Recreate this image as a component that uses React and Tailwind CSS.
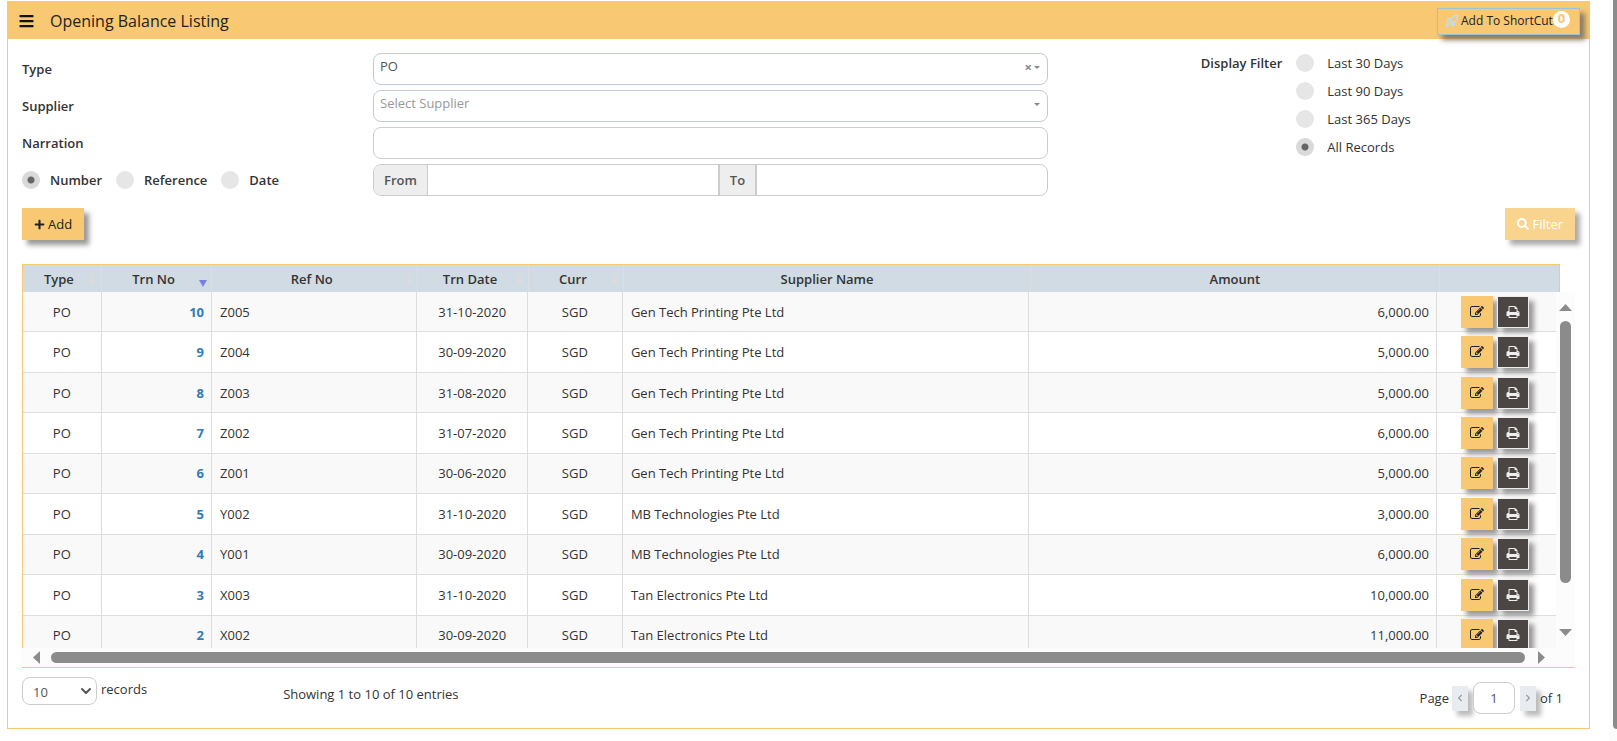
import React, { useState } from 'react';
import {
  FaBars,
  FaPlus,
  FaSearch,
  FaChevronLeft,
  FaChevronRight,
} from 'react-icons/fa';
import { FiChevronDown } from 'react-icons/fi';
import { Rocket } from 'lucide-react';
import clsx from 'clsx';

const records = [
  { no: 10, ref: 'Z005', date: '31-10-2020', supplier: 'Gen Tech Printing Pte Ltd', amount: '6,000.00' },
  { no: 9, ref: 'Z004', date: '30-09-2020', supplier: 'Gen Tech Printing Pte Ltd', amount: '5,000.00' },
  { no: 8, ref: 'Z003', date: '31-08-2020', supplier: 'Gen Tech Printing Pte Ltd', amount: '5,000.00' },
  { no: 7, ref: 'Z002', date: '31-07-2020', supplier: 'Gen Tech Printing Pte Ltd', amount: '6,000.00' },
  { no: 6, ref: 'Z001', date: '30-06-2020', supplier: 'Gen Tech Printing Pte Ltd', amount: '5,000.00' },
  { no: 5, ref: 'Y002', date: '31-10-2020', supplier: 'MB Technologies Pte Ltd', amount: '3,000.00' },
  { no: 4, ref: 'Y001', date: '30-09-2020', supplier: 'MB Technologies Pte Ltd', amount: '6,000.00' },
  { no: 3, ref: 'X003', date: '31-10-2020', supplier: 'Tan Electronics Pte Ltd', amount: '10,000.00' },
  { no: 2, ref: 'X002', date: '30-09-2020', supplier: 'Tan Electronics Pte Ltd', amount: '11,000.00' },
];

const columns = [
  { label: 'Type', sort: 'both' },
  { label: 'Trn No', sort: 'desc' },
  { label: 'Ref No', sort: 'both' },
  { label: 'Trn Date', sort: 'both' },
  { label: 'Curr', sort: 'both' },
  { label: 'Supplier Name' },
  { label: 'Amount' },
  { label: '' },
];

const searchBy = ['Number', 'Reference', 'Date'];
const periods = ['Last 30 Days', 'Last 90 Days', 'Last 365 Days', 'All Records'];

const ColGroup = () => (
  <colgroup>
    <col className="w-[5.1%]" />
    <col className="w-[7.2%]" />
    <col className="w-[13.4%]" />
    <col className="w-[7.2%]" />
    <col className="w-[6.2%]" />
    <col className="w-[26.5%]" />
    <col className="w-[26.6%]" />
    <col className="w-[7.8%]" />
  </colgroup>
);

const Radio = ({ name, label, checked, onChange, className, textClass }) => (
  <label className={clsx('flex items-center', className)}>
    <input
      type="radio"
      name={name}
      checked={checked}
      onChange={onChange}
      className="appearance-none w-[18px] h-[18px] rounded-full bg-[#e6e6e6] checked:bg-[#d9d9d9] checked:bg-[radial-gradient(circle,#666_3px,transparent_4px)] shrink-0"
    />
    <span className={textClass}>{label}</span>
  </label>
);

const SortIcon = ({ sort }) => {
  if (!sort) return null;
  return (
    <svg viewBox="0 0 8 14" className="absolute right-1 top-2 w-2 h-3.5" aria-hidden="true">
      {sort === 'both' ? (
        <path d="M4 0l3.5 6h-7zM4 13L.5 7h7z" fill="#d9dbdf" />
      ) : (
        <path d="M0 7h8l-4 7z" fill="#7b7fe0" />
      )}
    </svg>
  );
};

const EditIcon = () => (
  <svg viewBox="0 0 1792 1792" className="w-3.5 h-3.5" fill="currentColor" aria-hidden="true">
    <path d="M888 1184l116-116-152-152-116 116v56h96v96h56zm440-720q-16-16-33 1l-350 350q-17 17-1 33t33-1l350-350q17-17 1-33zm80 594v190q0 119-84.500 203.500t-203.500 84.500h-832q-119 0-203.500-84.500t-84.500-203.500v-832q0-119 84.500-203.500t203.500-84.500h832q63 0 117 25 15 7 18 23 3 17-9 29l-49 49q-14 14-32 8-23-6-45-6h-832q-66 0-113 47t-47 113v832q0 66 47 113t113 47h832q66 0 113-47t47-113v-126q0-13 9-22l64-64q15-15 35-7t20 29zm-96-738l288 288-672 672h-288v-288zm444 132l-92 92-288-288 92-92q28-28 68-28t68 28l152 152q28 28 28 68t-28 68z" />
  </svg>
);

const PrintIcon = () => (
  <svg viewBox="0 0 1792 1792" className="w-3.5 h-3.5" fill="currentColor" aria-hidden="true">
    <path d="M448 1536h896v-256h-896v256zm0-640h896v-384h-160q-40 0-68-28t-28-68v-160h-640v640zm1152 64q0-26-19-45t-45-19-45 19-19 45 19 45 45 19 45-19 19-45zm128 0v416q0 13-9.500 22.500t-22.500 9.500h-224v160q0 40-28 68t-68 28h-960q-40 0-68-28t-28-68v-160h-224q-13 0-22.500-9.500t-9.500-22.500v-416q0-79 56.500-135.500t135.500-56.500h64v-544q0-40 28-68t68-28h672q40 0 88 20t76 48l152 152q28 28 48 76t20 88v256h64q79 0 135.500 56.500t56.500 135.500z" />
  </svg>
);

const Arrow = ({ dir }) => {
  const paths = {
    up: 'M0 7l6.500-7 6.500 7z',
    down: 'M0 0h13l-6.500 7z',
    left: 'M7 0v13l-7-6.500z',
    right: 'M0 0v13l7-6.500z',
  };
  const vertical = dir === 'up' || dir === 'down';
  return (
    <svg
      viewBox={vertical ? '0 0 13 7' : '0 0 7 13'}
      className={clsx('shrink-0', vertical ? 'w-[13px] h-[7px]' : 'w-[7px] h-[13px]')}
      aria-hidden="true"
    >
      <path d={paths[dir]} fill="#8b8b8b" />
    </svg>
  );
};

const Header = () => (
  <header className="flex items-center justify-between bg-[#f8c872] h-[38px] pt-0.5 pl-[11px] pr-[9px]">
    <div className="flex items-center gap-4">
      <button aria-label="Menu">
        <FaBars className="w-[15px] h-4 text-[#111]" />
      </button>
      <h1 className="text-[16px] text-[#222]">Opening Balance Listing</h1>
    </div>
    <button className="flex items-center w-[143px] h-[27px] pl-[7px] border border-[#9cc3d9] text-[#222] text-xs shadow-[5px_5px_5px_#8b7d66]">
      <Rocket className="w-3.5 h-3.5 mr-0.5 shrink-0 stroke-[2.5] text-[#c4dcec]" />
      <span className="whitespace-nowrap">Add To ShortCut</span>
      <span className="w-[17px] h-[17px] mb-1 shrink-0 rounded-full bg-white text-[#f8c872] text-[13px] font-bold flex items-center justify-center">
        0
      </span>
    </button>
  </header>
);

const Filters = () => {
  const [by, setBy] = useState('Number');
  const [period, setPeriod] = useState('All Records');

  return (
    <div className="grid grid-cols-[351fr_675fr_527fr] pt-3.5">
      <div className="grid gap-[5px] auto-rows-[32px] items-center font-semibold">
        <label htmlFor="type">Type</label>
        <label htmlFor="supplier">Supplier</label>
        <label htmlFor="narration">Narration</label>
        <div className="flex items-center gap-3.5">
          {searchBy.map((item) => (
            <Radio
              key={item}
              name="by"
              label={item}
              checked={by === item}
              onChange={() => setBy(item)}
              textClass="ml-2.5"
            />
          ))}
        </div>
      </div>

      <div className="grid gap-[5px] auto-rows-[32px]">
        <div className="relative">
          <select
            id="type"
            className="appearance-none w-full h-full rounded-lg border border-[#c2cad8] px-1.5 pb-1.5 text-[#555]"
          >
            <option>PO</option>
          </select>
          <span className="absolute right-2 top-1.5 flex items-center gap-0.5 text-[#888] leading-4 font-bold pointer-events-none">
            ×
            <svg viewBox="0 0 6 3" className="w-1.5 h-[3px]" fill="#888"><path d="M0 0h6l-3 3z" /></svg>
          </span>
        </div>
        <div className="relative">
          <select
            id="supplier"
            className="appearance-none w-full h-full rounded-lg border border-[#c2cad8] px-1.5 pb-1.5 text-[#999]"
          >
            <option>Select Supplier</option>
          </select>
          <span className="absolute right-2 top-1.5 flex items-center h-4 pointer-events-none">
            <svg viewBox="0 0 6 3" className="w-1.5 h-[3px]" fill="#888"><path d="M0 0h6l-3 3z" /></svg>
          </span>
        </div>
        <input id="narration" className="w-full rounded-lg border border-[#ccc] px-2" />
        <div className="flex rounded-lg border border-[#ccc] overflow-hidden font-semibold text-[#555]">
          <label htmlFor="from" className="flex items-center px-2.5 bg-[#eee] border-r border-[#ccc]">
            From
          </label>
          <input id="from" className="flex-1 min-w-0 px-2" />
          <label htmlFor="to" className="flex items-center px-2.5 bg-[#eee] border-x-2 border-[#ccc]">
            To
          </label>
          <input id="to" className="flex-1 min-w-0 px-2" />
        </div>
      </div>

      <div className="flex pl-[29%]">
        <span className="font-semibold leading-5">Display Filter</span>
        <div className="ml-3.5 flex flex-col gap-2">
          {periods.map((item) => (
            <Radio
              key={item}
              name="period"
              label={item}
              checked={period === item}
              onChange={() => setPeriod(item)}
              className="h-5"
              textClass="ml-[13px]"
            />
          ))}
        </div>
      </div>
    </div>
  );
};

const Listing = () => (
  <div className="mt-6 border-b border-[#f8c872]">
    <div className="mr-[15px] border border-b-0 border-[#f8c872]">
      <table className="w-full table-fixed bg-[#d0dbe4]">
        <ColGroup />
        <thead>
          <tr className="h-[27px]">
            {columns.map((col) => (
              <th
                key={col.label}
                className={clsx(
                  'relative font-semibold border-r border-[#dcdfe2] last:border-r-0',
                  col.sort && 'pr-3.5 pl-2'
                )}
              >
                {col.label}
                <SortIcon sort={col.sort} />
              </th>
            ))}
          </tr>
        </thead>
      </table>
    </div>

    <div className="flex h-[356px]">
      <div className="flex-1 overflow-hidden border-l border-[#f8c872]">
        <table className="w-full table-fixed h-[364px]">
          <ColGroup />
          <tbody>
            {records.map((row) => (
              <tr key={row.no} className="odd:bg-[#f9f9f9] border-b border-[#ddd] [&>td]:border-r [&>td]:border-[#ddd] [&>td:last-child]:border-r-0">
                <td className="text-center">PO</td>
                <td className="px-[7px] text-right">
                  <a href="#record" className="font-bold text-[#337ab7]">{row.no}</a>
                </td>
                <td className="px-2">{row.ref}</td>
                <td className="text-center">{row.date}</td>
                <td className="text-center">SGD</td>
                <td className="px-2">{row.supplier}</td>
                <td className="px-[7px] text-right">{row.amount}</td>
                <td>
                  <div className="flex justify-center gap-1 pr-0.5">
                    <button
                      aria-label="Edit"
                      className="w-8 h-8 flex items-center justify-center bg-[#f8c872] text-[#222] shadow-[5px_5px_5px_#999]"
                    >
                      <EditIcon />
                    </button>
                    <button
                      aria-label="Print"
                      className="w-8 h-8 flex items-center justify-center bg-[#4b4544] border border-[#eee] text-[#eee] shadow-[5px_5px_5px_#999]"
                    >
                      <PrintIcon />
                    </button>
                  </div>
                </td>
              </tr>
            ))}
          </tbody>
        </table>
      </div>
      <div className="w-[19px] flex flex-col items-center bg-[#fcfcfc] py-3">
        <Arrow dir="up" />
        <div className="flex-1 w-full flex flex-col items-center pt-2.5">
          <div className="w-[11px] h-[85%] rounded-full bg-[#8b8b8b]" />
        </div>
        <Arrow dir="down" />
      </div>
    </div>

    <div className="flex items-center h-[19px] pl-[11px] pr-[30px] bg-[#fcfcfc]">
      <Arrow dir="left" />
      <div className="flex-1 h-[11px] ml-[11px] mr-[13px] rounded-full bg-[#8b8b8b]" />
      <Arrow dir="right" />
    </div>
  </div>
);

const Footer = () => (
  <div className="flex items-start justify-between pt-[9px] pb-3.5 pr-3">
    <div className="flex">
      <div className="relative">
        <select
          id="page-size"
          className="appearance-none w-[75px] h-7 rounded-lg border border-[#ccc] pl-2.5 pt-0.5 text-[#555]"
        >
          <option>10</option>
        </select>
        <FiChevronDown className="absolute right-[3px] top-1.5 w-4 h-4 stroke-3 text-[#555] pointer-events-none" />
      </div>
      <label htmlFor="page-size" className="ml-1 mt-0.5">records</label>
      <p className="ml-[136px] mt-[7px]">Showing 1 to 10 of 10 entries</p>
    </div>

    <div className="flex items-center mt-[5px]">
      <label htmlFor="page">Page</label>
      <button
        aria-label="Previous page"
        className="ml-[3px] w-4 h-[25px] flex items-center justify-center bg-[#e8ecf1] text-[#999] shadow-[5px_5px_5px_#bbb]"
      >
        <FaChevronLeft className="w-2 h-2" />
      </button>
      <input
        id="page"
        defaultValue="1"
        className="relative ml-[5px] w-[42px] h-8 rounded-lg border border-[#ccc] bg-white text-center text-[#555]"
      />
      <button
        aria-label="Next page"
        className="ml-[5px] w-4 h-[25px] flex items-center justify-center bg-[#e8ecf1] text-[#999] shadow-[5px_5px_5px_#bbb]"
      >
        <FaChevronRight className="w-2 h-2" />
      </button>
      <span className="relative ml-1">of 1</span>
    </div>
  </div>
);

export default function App() {
  return (
    <div className="flex bg-white font-['Open_Sans','Noto_Sans',sans-serif] text-[13px] leading-5 text-[#333]">
      <main className="flex-1 min-w-0 ml-[7px] mr-[19px] mt-px mb-3.5 border border-t-0 border-[#f8c872]">
        <Header />
        <div className="px-3.5">
          <Filters />
          <div className="flex justify-between mt-3">
            <button className="h-8 px-3 flex items-center gap-[3px] bg-[#f8c872] text-[#222] shadow-[5px_5px_5px_#999]">
              <FaPlus className="w-[11px] h-[11px]" />
              Add
            </button>
            <button className="h-8 px-3 flex items-center gap-[3px] bg-[#f8d48f] text-white shadow-[5px_5px_5px_#aaa]">
              <FaSearch className="w-3 h-3" />
              Filter
            </button>
          </div>
          <Listing />
          <Footer />
        </div>
      </main>
      <div className="w-2 flex justify-end bg-[#fcfcfc]">
        <div className="w-1 mb-3.5 rounded-bl bg-[#8b8b8b]" />
      </div>
    </div>
  );
}
